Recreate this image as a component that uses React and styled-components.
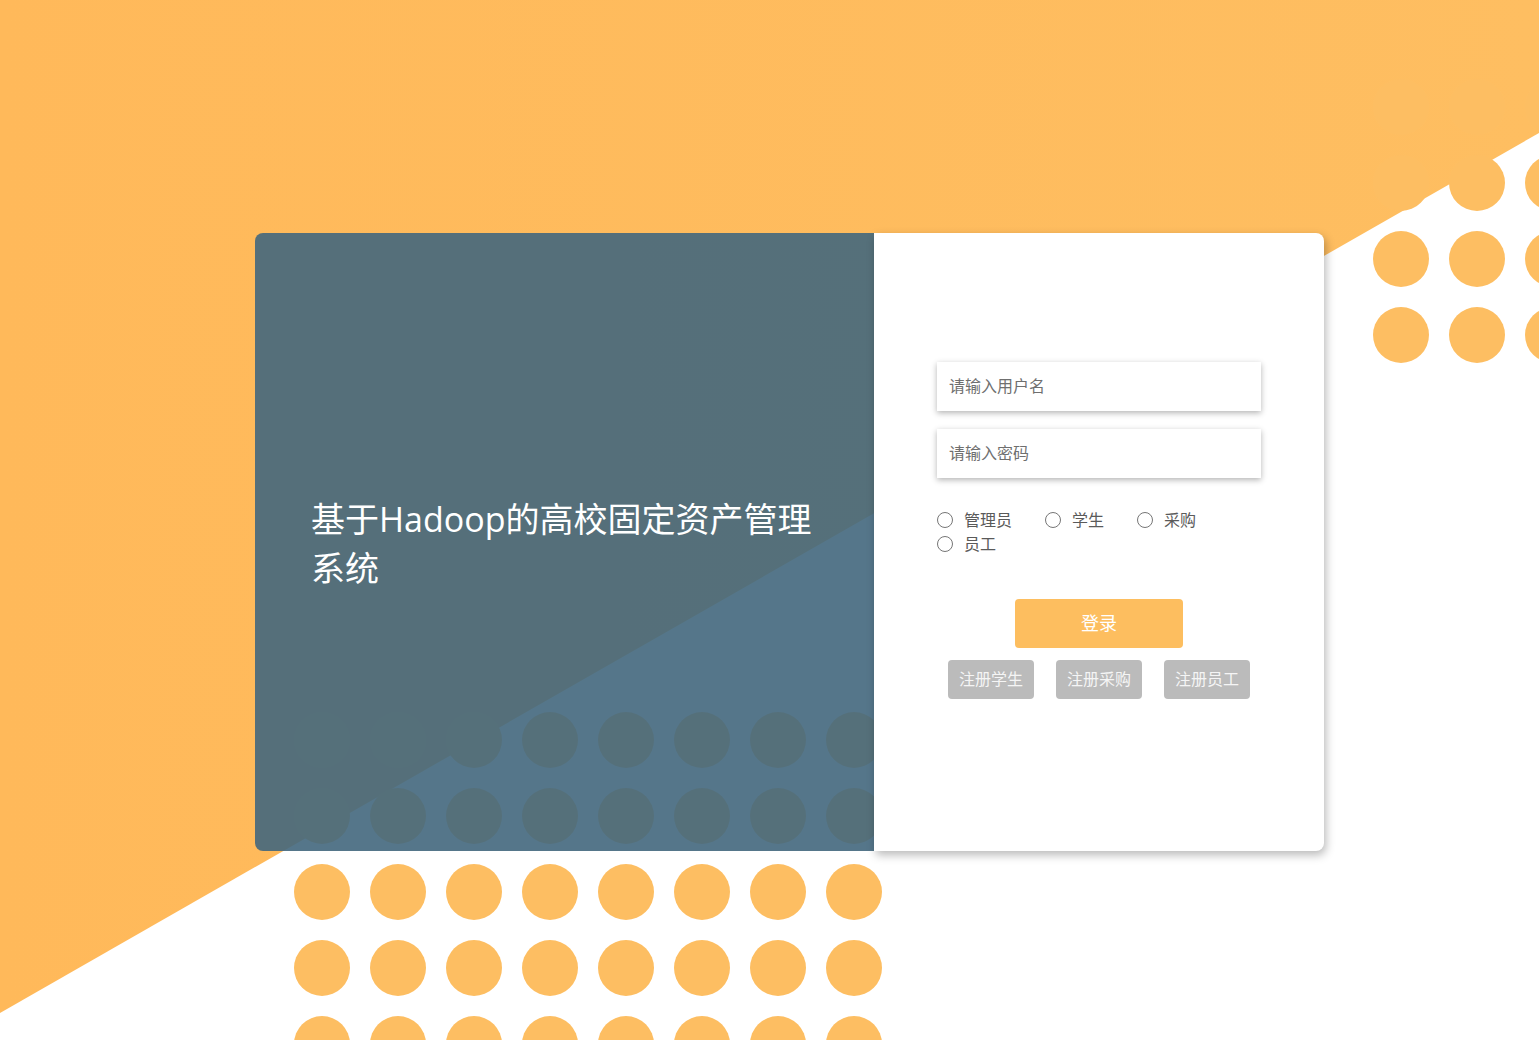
import React from "react";
import styled, { createGlobalStyle } from "styled-components";

const GlobalStyle = createGlobalStyle`
  html, body {
    margin: 0;
    padding: 0;
  }
  body {
    font-family: "Noto Sans CJK SC", "Noto Sans", sans-serif;
    background: #fff;
  }
  * {
    box-sizing: border-box;
  }
`;

const DOT = "#fdbe62";

const Page = styled.div`
  position: relative;
  width: 100%;
  min-height: 100vh;
  overflow: hidden;
  padding: 233px 0 0 255px;
`;

const Backdrop = styled.svg`
  position: absolute;
  top: 0;
  left: 0;
  z-index: 0;
`;

const Card = styled.div`
  position: relative;
  z-index: 1;
  display: flex;
  width: 1069px;
  height: 618px;
`;

const Banner = styled.div`
  width: 619px;
  height: 100%;
  display: flex;
  align-items: center;
  padding: 4px 57px 0 56px;
  border-radius: 8px 0 0 8px;
  background: rgba(66, 103, 125, 0.9);
`;

const Title = styled.h1`
  margin: 0;
  color: #fff;
  font-family: "Open Sans", "Noto Sans CJK SC", sans-serif;
  font-size: 34px;
  font-weight: 400;
  line-height: 49px;
`;

const FormPanel = styled.div`
  width: 450px;
  height: 100%;
  padding: 129px 63px 0;
  background: #fff;
  border-radius: 0 8px 8px 0;
  box-shadow: 2px 4px 10px rgba(0, 0, 0, 0.28);
`;

const Field = styled.input`
  display: block;
  width: 100%;
  height: 49px;
  margin-bottom: ${(p) => (p.$last ? 0 : "18px")};
  padding: 0 12px 3px;
  border: none;
  outline: none;
  font-family: inherit;
  font-size: 16px;
  color: #333;
  background: #fff;
  box-shadow: 0 2px 6px rgba(0, 0, 0, 0.3);
  &::placeholder {
    color: #6f6f6f;
  }
`;

const RoleGroup = styled.div`
  display: flex;
  flex-wrap: wrap;
  margin-top: 29px;
`;

const RoleOption = styled.label`
  display: flex;
  align-items: center;
  margin-right: 33px;
  font-size: 16px;
  line-height: 24px;
  color: #5a5a5a;
  cursor: pointer;
`;

const Radio = styled.input.attrs({ type: "radio" })`
  appearance: none;
  width: 16px;
  height: 16px;
  margin: 2px 11px 0 0;
  border: 1px solid #767676;
  border-radius: 50%;
  background: #fff;
  cursor: pointer;
  &:checked {
    background: radial-gradient(circle, #555 0 4px, #fff 4.5px);
  }
`;

const LoginButton = styled.button`
  display: block;
  width: 168px;
  height: 49px;
  margin: 44px auto 0;
  padding: 0 0 4px;
  border: none;
  border-radius: 4px;
  background: #fdbe5f;
  color: #fff;
  font-family: inherit;
  font-size: 18px;
  cursor: pointer;
`;

const RegisterRow = styled.div`
  display: flex;
  justify-content: center;
  gap: 22px;
  margin-top: 12px;
`;

const RegisterButton = styled.button`
  width: 86px;
  height: 39px;
  border: none;
  border-radius: 4px;
  background: #bbbbbb;
  color: #f5f5f5;
  font-family: inherit;
  font-size: 16px;
  padding: 0 0 3px;
  cursor: pointer;
`;

const roles = ["管理员", "学生", "采购", "员工"];
const registers = ["注册学生", "注册采购", "注册员工"];

function Background() {
  return (
    <Backdrop width="1539" height="1040" viewBox="0 0 1539 1040">
      <defs>
        <linearGradient id="warm" x1="0" y1="0" x2="1" y2="0">
          <stop offset="0" stopColor="#ffb95a" />
          <stop offset="1" stopColor="#febe61" />
        </linearGradient>
        <pattern id="dotsLow" x="284" y="702" width="76" height="76" patternUnits="userSpaceOnUse">
          <circle cx="38" cy="38" r="28" fill={DOT} />
        </pattern>
        <pattern id="dotsHigh" x="1363" y="-7" width="76" height="76" patternUnits="userSpaceOnUse">
          <circle cx="38" cy="38" r="28" fill={DOT} />
        </pattern>
      </defs>
      <rect width="1539" height="1040" fill="#fff" />
      <polygon points="0,0 1539,0 1539,133 0,1013" fill="url(#warm)" />
      <rect x="284" y="702" width="608" height="380" fill="url(#dotsLow)" />
      <rect x="1363" y="69" width="228" height="304" fill="url(#dotsHigh)" />
    </Backdrop>
  );
}

export default function App() {
  return (
    <>
      <GlobalStyle />
      <Page>
        <Background />
        <Card>
          <Banner>
            <Title>基于Hadoop的高校固定资产管理系统</Title>
          </Banner>
          <FormPanel>
            <Field placeholder="请输入用户名" />
            <Field type="password" placeholder="请输入密码" $last />
            <RoleGroup>
              {roles.map((r) => (
                <RoleOption key={r}>
                  <Radio name="role" value={r} />
                  {r}
                </RoleOption>
              ))}
            </RoleGroup>
            <LoginButton>登录</LoginButton>
            <RegisterRow>
              {registers.map((r) => (
                <RegisterButton key={r}>{r}</RegisterButton>
              ))}
            </RegisterRow>
          </FormPanel>
        </Card>
      </Page>
    </>
  );
}
